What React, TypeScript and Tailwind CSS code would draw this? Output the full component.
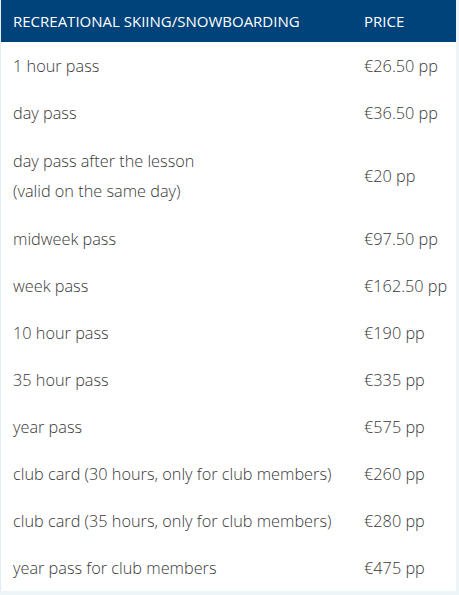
const rows: { label: string[]; price: string }[] = [
  { label: ["1 hour pass"], price: "€26.50 pp" },
  { label: ["day pass"], price: "€36.50 pp" },
  { label: ["day pass after the lesson", "(valid on the same day)"], price: "€20 pp" },
  { label: ["midweek pass"], price: "€97.50 pp" },
  { label: ["week pass"], price: "€162.50 pp" },
  { label: ["10 hour pass"], price: "€190 pp" },
  { label: ["35 hour pass"], price: "€335 pp" },
  { label: ["year pass"], price: "€575 pp" },
  { label: ["club card (30 hours, only for club members)"], price: "€260 pp" },
  { label: ["club card (35 hours, only for club members)"], price: "€280 pp" },
  { label: ["year pass for club members"], price: "€475 pp" },
];

export default function App() {
  return (
    <div className="min-h-screen w-[459px] bg-[#eef5f8] font-['Open_Sans',sans-serif]">
      <div className="w-[456px] bg-white border-l border-[#e4edf1]">
        <div className="flex h-[42px] items-center bg-[#00437a] text-[15px] text-white">
          <div className="w-[351px] pl-[12px]">RECREATIONAL SKIING/SNOWBOARDING</div>
          <div className="pl-[12px]">PRICE</div>
        </div>
        {rows.map((r) => (
          <div
            key={r.price}
            className={
              r.label.length > 1
                ? "flex items-center py-[9.5px] text-[16.3px] font-light leading-[30px] text-[#383838]"
                : "flex items-center py-[8.5px] text-[16.3px] font-light leading-[30px] text-[#383838]"
            }
          >
            <div className="w-[351px] pl-[12px]">
              {r.label.map((l) => (
                <div key={l}>{l}</div>
              ))}
            </div>
            <div className="pl-[12px]">{r.price}</div>
          </div>
        ))}
      </div>
    </div>
  );
}
